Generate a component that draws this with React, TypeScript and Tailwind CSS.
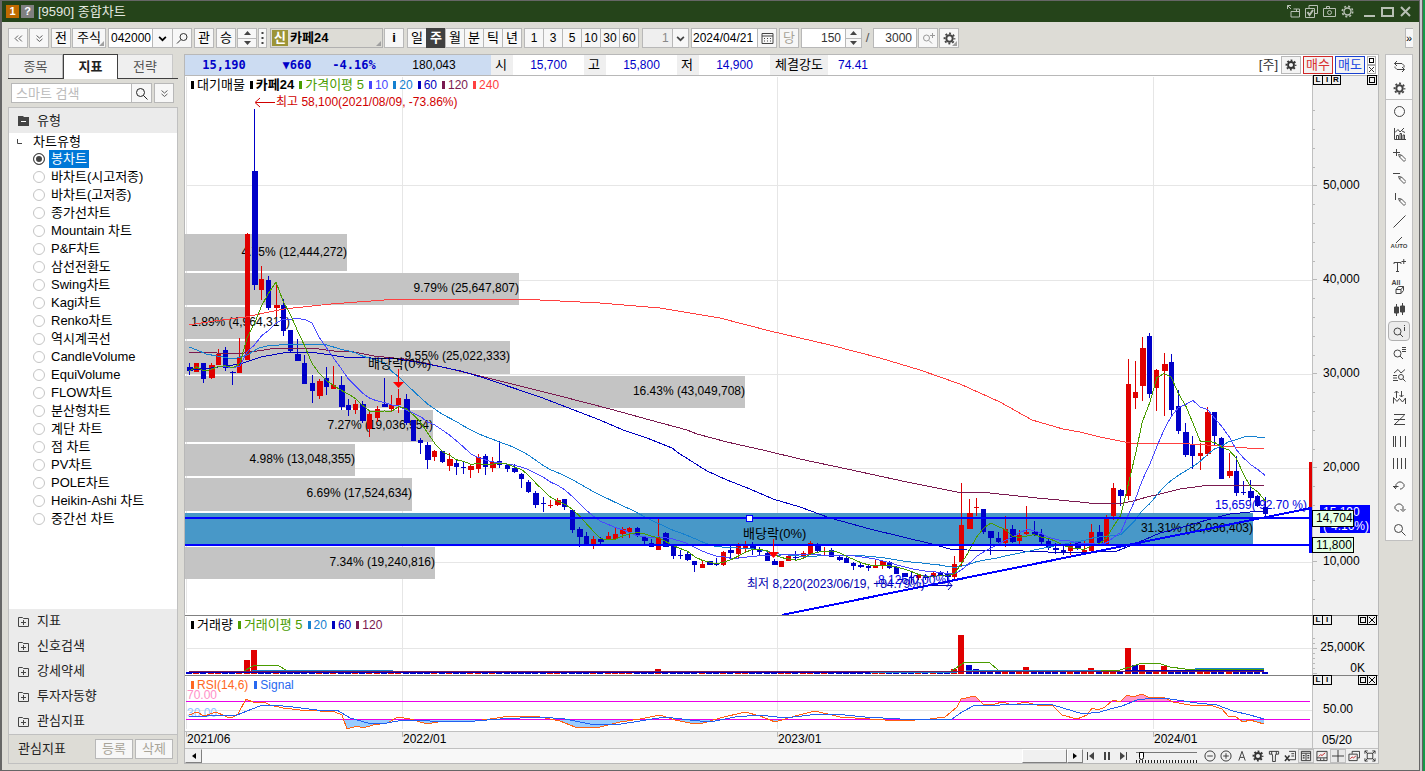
import { ReactNode } from 'react'

// [body top, body bottom, high, low, rising]
const candles = [
  [367, 371, 363, 375, 0], [363, 372, 363, 372, 1], [363, 379, 363, 383, 0], [365, 378, 363, 379, 1], [354, 365, 349, 365, 1],
  [350, 368, 347, 371, 0], [372, 373, 371, 385, 0], [358, 373, 338, 373, 1], [234, 360, 233, 360, 1], [171, 285, 109, 290, 0],
  [279, 290, 266, 300, 1], [280, 308, 276, 310, 0], [305, 308, 282, 317, 1], [305, 331, 299, 336, 0], [330, 351, 330, 352, 0],
  [354, 361, 339, 361, 0], [363, 384, 355, 384, 0], [383, 391, 375, 403, 0], [381, 396, 379, 399, 1], [378, 387, 367, 395, 0],
  [385, 389, 366, 389, 1], [385, 407, 376, 410, 0], [405, 410, 399, 416, 0], [404, 410, 400, 414, 1], [404, 421, 401, 423, 0],
  [414, 429, 412, 437, 1], [409, 418, 406, 422, 1], [404, 407, 378, 407, 0], [405, 409, 395, 411, 1], [398, 405, 389, 413, 1],
  [399, 423, 394, 425, 0], [420, 441, 420, 441, 0], [440, 443, 438, 454, 0], [445, 460, 442, 469, 0], [451, 457, 450, 461, 1],
  [451, 462, 451, 463, 0], [459, 466, 453, 471, 1], [463, 467, 460, 475, 0], [467, 468, 461, 474, 0], [466, 470, 464, 478, 1],
  [457, 469, 454, 473, 1], [456, 467, 454, 475, 0], [462, 468, 457, 472, 1], [461, 465, 441, 468, 0], [465, 469, 464, 472, 0],
  [468, 472, 464, 473, 0], [474, 479, 473, 488, 0], [482, 492, 480, 493, 0], [493, 505, 491, 508, 0], [503, 504, 497, 512, 0],
  [505, 506, 500, 508, 1], [500, 505, 498, 506, 1], [499, 507, 499, 510, 0], [510, 530, 510, 533, 0], [529, 537, 527, 547, 0],
  [536, 545, 532, 545, 0], [539, 545, 536, 549, 1], [539, 542, 537, 545, 0], [536, 539, 532, 539, 1], [534, 539, 527, 539, 1],
  [529, 534, 527, 538, 1], [528, 532, 527, 538, 1], [528, 536, 527, 537, 0], [537, 541, 536, 545, 0], [543, 547, 539, 547, 0],
  [537, 550, 519, 550, 1], [533, 547, 532, 547, 0], [545, 556, 545, 559, 0], [555, 556, 550, 559, 0], [554, 560, 551, 561, 0],
  [561, 565, 561, 572, 0], [564, 568, 560, 568, 1], [561, 565, 561, 565, 0], [563, 565, 558, 566, 0], [552, 565, 551, 566, 1],
  [550, 553, 546, 559, 0], [546, 554, 543, 558, 1], [546, 548, 541, 553, 1], [544, 549, 542, 555, 0], [549, 552, 547, 555, 0],
  [553, 561, 551, 561, 0], [561, 565, 559, 565, 0], [561, 567, 561, 567, 1], [556, 561, 554, 561, 1], [557, 558, 551, 560, 0],
  [553, 557, 551, 558, 1], [543, 554, 541, 554, 1], [545, 551, 543, 552, 0], [551, 552, 547, 555, 1], [550, 557, 548, 557, 0],
  [557, 560, 556, 561, 0], [558, 563, 555, 563, 0], [563, 566, 562, 570, 0], [565, 567, 563, 568, 0], [566, 568, 565, 571, 0],
  [565, 568, 560, 568, 1], [561, 566, 560, 569, 1], [562, 568, 561, 569, 0], [567, 574, 566, 574, 0], [573, 577, 573, 577, 0],
  [577, 578, 572, 583, 0], [575, 578, 575, 580, 1], [577, 578, 574, 580, 0], [573, 577, 571, 578, 1], [572, 575, 571, 576, 0],
  [573, 577, 571, 581, 0], [564, 577, 556, 580, 1], [525, 562, 483, 566, 1], [513, 529, 499, 529, 1], [507, 508, 498, 516, 1],
  [509, 532, 509, 534, 0], [531, 538, 531, 555, 0], [538, 542, 532, 543, 0], [529, 543, 516, 547, 1], [529, 542, 525, 543, 0],
  [535, 541, 530, 544, 1], [532, 534, 506, 535, 1], [532, 535, 521, 536, 0], [534, 542, 529, 545, 0], [541, 548, 537, 550, 0],
  [548, 550, 543, 554, 0], [550, 552, 546, 555, 0], [545, 551, 543, 555, 1], [542, 549, 541, 550, 0], [550, 552, 540, 552, 1],
  [532, 551, 524, 551, 1], [532, 543, 525, 546, 0], [517, 544, 515, 544, 1], [488, 516, 483, 520, 1], [490, 496, 489, 506, 0],
  [384, 496, 359, 500, 1], [392, 398, 361, 409, 1], [348, 386, 337, 401, 1], [336, 394, 333, 398, 0], [370, 388, 369, 411, 1],
  [364, 371, 353, 416, 1], [362, 410, 354, 415, 0], [406, 431, 390, 434, 0], [432, 455, 423, 457, 0], [444, 456, 436, 469, 0],
  [453, 456, 443, 470, 1], [412, 454, 407, 456, 1], [412, 436, 412, 445, 0], [438, 479, 437, 479, 0], [471, 476, 453, 478, 1],
  [471, 493, 456, 496, 0], [492, 493, 481, 495, 0], [491, 498, 480, 501, 0], [496, 506, 495, 507, 0], [507, 514, 497, 517, 0],
]

const closes = candles.map(([top, bottom, , , up]) => (up ? top : bottom))
const cx = (i: number) => 189.4 + i * 7.22

function average(period: number, from = 0) {
  return closes
    .map((_, i) => {
      const part = closes.slice(Math.max(0, i - period + 1), i + 1)
      return `${cx(i).toFixed(1)},${(part.reduce((a, b) => a + b, 0) / part.length).toFixed(1)}`
    })
    .slice(from)
    .join(' ')
}

const priceLines = [
  { color: '#ff4040', points: '189,325 214,321 246,317 264,313 284,309 331,304 384,300 401,299 520,299 600,303 660,308 720,318 770,331 830,345 880,358 920,370 960,384 1000,402 1032,420 1063,429 1080,432 1100,437 1130,443 1190,444 1223,446 1247,448 1264,449' },
  { color: '#7a1a50', points: '189,352 217,353 244,353 257,351 277,348 311,348 334,351 354,352 374,356 404,359 424,363 451,369 484,377 560,396 610,409 650,420 687,430 697,434 727,442 767,451 800,459 847,469 907,482 957,492 980,492 1037,498 1080,502 1097,504 1123,503 1133,501 1147,497 1160,494 1180,489 1210,485 1240,485 1264,486' },
  { color: '#0000c0', points: '189,370 211,368 240,364 261,357 283,353 297,352 317,353 344,357 397,359 417,362 437,366 461,371 484,378 540,397 600,420 623,430 647,438 672,448 680,454 707,471 727,480 750,489 773,499 800,507 830,518 870,529 907,538 928,543 950,549 967,550 1023,551 1073,553 1097,552 1117,551 1137,543 1160,533 1183,527 1207,520 1230,514 1250,512 1264,511' },
  { color: '#1480d0', points: '189,347 197,350 206,354 217,356 234,359 247,355 259,348 267,346 291,344 324,344 ' + average(20, 20) },
  { color: '#4848ff', points: average(10) },
  { color: '#4a9c00', points: average(5) },
]

const profile = [
  { y: 234, h: 37, end: 347, label: '4.75% (12,444,272)' },
  { y: 273, h: 32, end: 519, label: '9.79% (25,647,807)' },
  { y: 307, h: 32, end: 249, label: '1.89% (4,964,317)' },
  { y: 341, h: 33, end: 510, label: '9.55% (25,022,333)' },
  { y: 376, h: 32, end: 745, label: '16.43% (43,049,708)' },
  { y: 410, h: 32, end: 433, label: '7.27% (19,036,954)' },
  { y: 444, h: 32, end: 355, label: '4.98% (13,048,355)' },
  { y: 478, h: 33, end: 412, label: '6.69% (17,524,634)' },
  { y: 513, h: 32, end: 1253, label: '31.31% (82,036,403)' },
  { y: 547, h: 32, end: 435, label: '7.34% (19,240,816)' },
]

const volumes: Record<number, number> = {
  8: 14, 9: 24, 65: 5, 66: 3, 106: 5, 107: 39, 108: 9, 109: 5, 110: 3, 113: 4, 116: 7, 117: 4, 118: 3, 125: 6, 127: 3,
  128: 4, 129: 3, 130: 26, 131: 9, 132: 9, 133: 4, 134: 4, 135: 8, 136: 4, 137: 4, 138: 3, 141: 5, 142: 3,
}

const rsi = '189,715 197,712 204,716 216,712 227,717 233,717 238,714 246,699 255,703 264,702 270,705 283,708 300,710 320,711 335,712 342,715 347,729 357,726 363,728 373,725 387,723 398,717 410,719 427,724 443,721 475,721 490,719 510,716 540,717 560,721 575,727 600,727 620,722 640,719 660,715 675,720 690,723 700,724 720,718 745,712 760,716 775,722 795,716 815,711 840,717 870,719 900,721 930,719 945,717 957,707 961,699 975,696 983,704 995,704 1002,702 1013,705 1025,702 1037,705 1053,706 1062,715 1077,719 1087,715 1092,708 1098,710 1105,707 1113,700 1120,702 1127,695 1133,697 1142,694 1150,698 1163,697 1173,702 1190,705 1210,705 1222,709 1228,716 1235,716 1243,722 1250,720 1257,722 1264,724'
const signal = '189,716 207,716 220,715 237,715 247,711 260,706 273,705 293,707 317,710 337,710 350,718 368,723 387,723 403,720 430,721 475,721 500,719 540,717 565,719 590,724 615,725 640,721 665,717 690,720 710,722 735,717 760,715 785,718 810,715 835,714 865,717 900,719 930,720 952,719 962,712 975,705 1000,705 1010,704 1033,704 1053,705 1063,708 1083,714 1100,712 1110,709 1122,706 1137,700 1153,698 1170,699 1197,703 1217,705 1233,711 1250,715 1264,719'

const chartTypes = [
  '봉차트', '바차트(시고저종)', '바차트(고저종)', '종가선차트', 'Mountain 차트', 'P&F차트', '삼선전환도', 'Swing차트', 'Kagi차트', 'Renko차트',
  '역시계곡선', 'CandleVolume', 'EquiVolume', 'FLOW차트', '분산형차트', '계단 차트', '점 차트', 'PV차트', 'POLE차트', 'Heikin-Ashi 차트', '중간선 차트',
]

function Ico({ children, size = 13 }: { children: ReactNode; size?: number }) {
  return (
    <svg width={size} height={size} viewBox="0 0 13 13" fill="none" stroke="currentColor" strokeWidth="1" className="shrink-0" aria-hidden="true">
      {children}
    </svg>
  )
}

const gear = (
  <>
    <circle cx="6.5" cy="6.5" r="3.2" strokeWidth="2" />
    <circle cx="6.5" cy="6.5" r="5" strokeWidth="1.8" strokeDasharray="1.96 1.96" strokeDashoffset="1" />
  </>
)
const lens = (
  <>
    <circle cx="5.5" cy="5.5" r="4" />
    <path d="M8.500 8.500l4 4" />
  </>
)
const pencil = <path d="M5.500 5.500l3 .5 4.500 4.500-2 2L6.500 8zM8.500 6L6.500 8" strokeWidth=".9" />

function Btn({ className = '', label, children }: { className?: string; label?: string; children: ReactNode }) {
  return (
    <button type="button" aria-label={label} className={`flex h-5 shrink-0 items-center justify-center border border-[#b8b8b8] bg-[#f7f7f7] ${className}`}>
      {children}
    </button>
  )
}

function Spinner({ className = '' }: { className?: string }) {
  return (
    <span className={`flex h-5 flex-col border border-[#b8b8b8] bg-[#f7f7f7] ${className}`}>
      <button type="button" aria-label="증가" className="flex flex-1 items-center justify-center border-b border-[#b8b8b8]">
        <svg width="7" height="4" viewBox="0 0 7 4"><path d="M0 4L3.5 0 7 4z" fill="#444" /></svg>
      </button>
      <button type="button" aria-label="감소" className="flex flex-1 items-center justify-center">
        <svg width="7" height="4" viewBox="0 0 7 4"><path d="M0 0L3.5 4 7 0z" fill="#444" /></svg>
      </button>
    </span>
  )
}

function TitleBar() {
  return (
    <header className="flex h-[21px] shrink-0 items-center bg-[#25441a] pl-[4px] pr-[7px] text-[13px] text-[#e4e8e0]">
      <span className="flex size-[13px] items-center justify-center bg-[#c06a00] text-[11px] font-bold text-white">1</span>
      <span className="ml-[2px] flex size-[13px] items-center justify-center bg-[#808080] text-[11px] font-bold text-white">?</span>
      <h1 className="ml-1 font-normal">[9590] 종합차트</h1>
      <div className="ml-auto flex items-center gap-[5px] text-[#b8c0b4]">
        <button type="button" aria-label="분리"><Ico><path d="M.5 4V.5H4M.5.5l3.500 3.500M4 6.500V12h8.500V4H6.500M4 6.500h8.500M9.500 4v2.500" /></Ico></button>
        <button type="button" aria-label="체크"><Ico><path d="M4 3V.5h8.500v8H10M.5 3.500h9v9h-9z" /><path d="M2.500 7l2 3 3.500-5" strokeWidth="2" /></Ico></button>
        <button type="button" aria-label="캡처"><Ico><path d="M.5 3.500h12v8H.5zM3.500 3.500v-2h3v2" /><circle cx="6.500" cy="7.500" r="2" /></Ico></button>
        <button type="button" aria-label="설정"><Ico><circle cx="6.500" cy="6.500" r="3.500" strokeWidth="1.400" /><circle cx="6.500" cy="6.500" r="5.200" strokeWidth="1.600" strokeDasharray="2.040 2.040" /></Ico></button>
        <button type="button" aria-label="최소화" className="ml-1"><Ico><path d="M1 11h11" strokeWidth="2" /></Ico></button>
        <button type="button" aria-label="최대화"><Ico><path d="M1 3h11v8H1z" strokeWidth="2" /></Ico></button>
        <button type="button" aria-label="닫기"><Ico><path d="M2 2l9 9M11 2l-9 9" strokeWidth="2" /></Ico></button>
      </div>
    </header>
  )
}

function Toolbar() {
  return (
    <div className="flex h-8 shrink-0 items-center gap-px pl-[6px] pr-[6px] text-[13px] text-black">
      <Btn label="이전" className="w-5 text-[#444]"><Ico size={11}><path d="M6 3L2.500 6.500 6 10M10.500 3L7 6.500l3.500 3.500" /></Ico></Btn>
      <Btn label="펼치기" className="w-5 text-[#444]"><Ico size={11}><path d="M3 3l3.500 3L10 3M3 7l3.500 3L10 7" /></Ico></Btn>
      <Btn className="ml-px w-5">전</Btn>
      <Btn className="relative w-[34px]">주식<Corner /></Btn>
      <div className="ml-px flex">
        <input aria-label="종목코드" defaultValue="042000" className="h-5 w-[45px] border border-[#b8b8b8] bg-white pl-[2px] text-[12px]" />
        <Btn label="종목 목록" className="w-[20px] border-l-0"><Ico size={11}><path d="M2.500 4.500l4 4 4-4" strokeWidth="2" /></Ico></Btn>
        <Btn label="종목 검색" className="w-[19px] border-l-0 text-[#333]"><Ico><circle cx="7.500" cy="5" r="3.500" /><path d="M5 7.500l-4 4" /></Ico></Btn>
      </div>
      <Btn className="ml-px w-5">관</Btn>
      <Btn className="ml-px w-5">승</Btn>
      <Spinner className="w-5" />
      <Btn label="더보기" className="w-[9px]">
        <svg width="3" height="12" viewBox="0 0 3 12"><path d="M.5 0h2v2h-2zM.5 5h2v2h-2zM.5 10h2v2h-2z" fill="#444" /></svg>
      </Btn>
      <div className="relative ml-[2px] flex h-5 w-[113px] items-center border border-[#b0b0b0] pl-px font-bold">
        <span className="mr-[2px] flex h-4 w-4 items-center justify-center bg-[#9c9438] text-white">신</span>카페24
        <Corner />
      </div>
      <Btn className="w-5 font-bold">i</Btn>
      <div className="ml-[2px] flex">
        {['일', '주', '월', '분', '틱', '년'].map((t) => (
          <Btn key={t} className={`-mr-px w-5 ${t === '주' ? 'border-[#404040]! bg-[#404040]! font-bold text-white' : ''}`}>{t}</Btn>
        ))}
      </div>
      <div className="ml-[2px] flex text-[12px]">
        {['1', '3', '5', '10', '30', '60'].map((t) => (
          <Btn key={t} className="-mr-px w-5">{t}</Btn>
        ))}
      </div>
      <div className="relative ml-[3px] text-[12px] text-[#888]">
        <select aria-label="주기" className="h-5 w-[47px] appearance-none border border-[#b8b8b8] bg-[#efefef] pl-[19px]">
          <option>1</option>
        </select>
        <span className="pointer-events-none absolute right-px top-px flex h-[18px] w-4 items-center justify-center border-l border-[#b8b8b8] bg-[#f7f7f7] text-[#444]">
          <Ico size={11}><path d="M2.500 4.500l4 4 4-4" strokeWidth="2" /></Ico>
        </span>
      </div>
      <div className="ml-px flex">
        <input aria-label="날짜" defaultValue="2024/04/21" className="h-5 w-[67px] border border-[#b8b8b8] bg-white pl-px text-[12px]" />
        <Btn label="달력" className="w-[19px] border-l-0 text-[#444]">
          <Ico><path d="M1 1.500h11v10H1zM1 4h11" /><path d="M3 6.500h7M3 9h7" strokeDasharray="1 2" /></Ico>
        </Btn>
      </div>
      <Btn className="ml-px w-5 text-[#a8a498]">당</Btn>
      <div className="ml-px flex">
        <input aria-label="표시 봉수" defaultValue="150" className="h-5 w-[45px] border border-[#b8b8b8] bg-white pr-1 text-right text-[12px] text-[#333]" />
        <Spinner className="w-4 border-l-0" />
      </div>
      <span className="w-[9px] text-center text-[#555]">/</span>
      <input aria-label="전체 봉수" defaultValue="3000" className="h-5 w-[44px] border border-[#b8b8b8] bg-white pr-1 text-right text-[12px] text-[#333]" />
      <Btn label="확대" className="w-5 text-[#999]"><Ico><circle cx="4.500" cy="6" r="3" /><path d="M7 8.500l3 3M10.500 1v5M8 3.500h5" /></Ico></Btn>
      <Btn label="차트 설정" className="relative w-5 text-[#444]"><Ico>{gear}</Ico><Corner /></Btn>
      <button type="button" aria-label="도구 더보기" className="ml-auto flex h-5 w-2 items-center border border-r-0 border-[#b8b8b8] bg-[#f7f7f7] text-[11px]">»</button>
    </div>
  )
}

function Corner() {
  return <svg className="absolute bottom-px right-px" width="5" height="5" viewBox="0 0 5 5"><path d="M5 0v5H0z" fill="#a0a0a0" /></svg>
}

function Sidebar() {
  return (
    <aside className="flex w-[170px] shrink-0 flex-col text-[13px] text-[#222]">
      <div className="flex h-[25px] shrink-0 border-b border-[#404040]">
        <button type="button" className="h-6 w-[55px] border border-b-0 border-[#b8b8b8] bg-[#efefef] text-[#555]">종목</button>
        <button type="button" className="h-[25px] w-[55px] border border-b-0 border-[#404040] bg-white font-bold">지표</button>
        <button type="button" className="h-6 w-[55px] border border-b-0 border-l-0 border-[#c8c8c8] bg-[#efefef] text-[#555]">전략</button>
      </div>
      <div className="mt-1 flex shrink-0 pl-[3px]">
        <input aria-label="스마트 검색" placeholder="스마트 검색" className="h-5 w-[121px] border border-[#b8b8b8] bg-white pl-1 placeholder:text-[#bbb]" />
        <Btn label="검색" className="w-5 border-l-0"><Ico>{lens}</Ico></Btn>
        <Btn label="펼치기" className="ml-[2px] w-5 text-[#444]"><Ico size={11}><path d="M3 3l3.500 3L10 3M3 7l3.500 3L10 7" /></Ico></Btn>
      </div>
      <div className="mt-1 flex min-h-0 flex-1 flex-col border border-[#c0c0c0] bg-white">
        <h2 className="flex h-[25px] shrink-0 items-center bg-[#ebebeb] pl-[9px]">
          <svg width="11" height="11" viewBox="0 0 11 11" className="mr-2"><path d="M0 1h5l1 1h5v9H0z" fill="#444" /><path d="M3 6h5v1H3z" fill="#fff" /></svg>
          유형
        </h2>
        <fieldset className="min-h-0 flex-1 overflow-hidden">
          <legend className="flex h-[17px] items-center pl-2 leading-4 text-black">
            <svg width="5" height="5" viewBox="0 0 5 5" className="mr-[11px]"><path d="M.5 0v4.500H5" fill="none" stroke="#444" /></svg>
            차트유형
          </legend>
          {chartTypes.map((name, i) => (
            <label key={name} className="flex h-[18px] items-center pl-6 leading-[18px] text-black">
              <input
                type="radio"
                name="chart"
                defaultChecked={i === 0}
                className="size-3 appearance-none rounded-full border border-[#c4c4c4] bg-white checked:border-[#444] checked:bg-[#444] checked:shadow-[inset_0_0_0_2px_#fff]"
              />
              <span className={`ml-1 px-[2px] ${i === 0 ? 'bg-[#0078d7] text-white' : ''}`}>{name}</span>
            </label>
          ))}
        </fieldset>
        <div className="shrink-0 bg-[#ebebeb]">
          {['지표', '신호검색', '강세약세', '투자자동향', '관심지표'].map((name) => (
            <button key={name} type="button" className="flex h-[25px] w-full items-center pb-px pl-[9px]">
              <svg width="11" height="11" viewBox="0 0 11 11" className="mr-2" fill="none" stroke="#444"><path d="M.5 1.500h4l1 1h5v8H.5zM3 6.500h5M5.500 4v5" /></svg>
              {name}
            </button>
          ))}
        </div>
        <div className="flex h-[29px] shrink-0 items-center border-t border-[#c0c0c0] bg-[#dddcd6] pl-[9px]">
          <span className="flex-1">관심지표</span>
          <Btn className="w-[38px] bg-[#ebebeb] text-[#a8a498]">등록</Btn>
          <Btn className="ml-[2px] mr-1 w-[38px] bg-[#ebebeb] text-[#a8a498]">삭제</Btn>
        </div>
      </div>
    </aside>
  )
}

function InfoBar() {
  const cells = [['시', '15,700'], ['고', '15,800'], ['저', '14,900']]
  return (
    <div className="flex h-[21px] shrink-0 items-stretch border-b border-[#b8b8b8] bg-white text-[12px] leading-[20px]">
      <div className="flex bg-[#ccdcf2] font-['DejaVu_Sans_Mono',monospace] font-bold text-[#0000c8]">
        <span className="w-[78px] text-center">15,190</span>
        <span className="w-[68px] text-center">▼660</span>
        <span className="w-[46px] text-center">-4.16%</span>
        <span className="w-[114px] text-center font-['Liberation_Sans',sans-serif] font-normal text-black">180,043</span>
      </div>
      {cells.map(([k, v]) => (
        <div key={k} className="flex">
          <span className="w-[22px] bg-[#efefef] pl-1 text-[13px]">{k}</span>
          <span className="w-[71px] text-center text-[#0000c8]">{v}</span>
        </div>
      ))}
      <span className="w-[58px] bg-[#efefef] text-center text-[13px]">체결강도</span>
      <span className="ml-[10px] text-[#0000c8]">74.41</span>
      <div className="ml-auto flex items-center gap-[2px] pr-[2px] text-[13px]">
        <span className="mr-px text-[#333]">[주]</span>
        <button type="button" aria-label="설정" className="flex h-[18px] w-5 items-center justify-center border border-[#b8b8b8] bg-[#f4f4f4] text-[#333]"><Ico size={12}>{gear}</Ico></button>
        <button type="button" className="h-[18px] w-[30px] border border-[#d02828] bg-[#f4f4f4] leading-4 text-[#d83030]">매수</button>
        <button type="button" className="h-[18px] w-[30px] border border-[#1840d0] bg-[#f4f4f4] leading-4 text-[#2048e0]">매도</button>
        <div className="flex flex-col">
          <button type="button" aria-label="확대" className="flex size-[9px] items-center justify-center border border-[#b0b0b0]"><span className="size-[5px] border border-black" /></button>
          <button type="button" aria-label="닫기" className="flex size-[9px] items-center justify-center border border-[#b0b0b0]"><svg width="5" height="5" viewBox="0 0 5 5" stroke="#333"><path d="M0 0l5 5M5 0L0 5" /></svg></button>
        </div>
      </div>
    </div>
  )
}

function Key({ color, text, bold }: { color: string; text: string; bold?: boolean }) {
  return (
    <span className={`flex items-center whitespace-nowrap ${bold ? 'font-bold' : ''} ${/^\d+$/.test(text) ? 'text-[12px]' : ''}`} style={{ color }}>
      <i className="mr-[3px] h-2 w-[3px]" style={{ background: color }} />
      {text}
    </span>
  )
}

function PaneButtons({ keys, close }: { keys: string[]; close?: boolean }) {
  return (
    <div className="absolute inset-x-0 top-0 -mt-px flex justify-between pr-px text-[8px] font-bold leading-[8px] text-black">
      <span className="flex">
        {keys.map((k) => (
          <button key={k} type="button" className="-mr-px h-[10px] w-[10px] border border-black">{k}</button>
        ))}
      </span>
      <span className="flex">
        <button type="button" aria-label="최대화" className="flex size-[10px] items-center justify-center border border-black"><span className="size-[6px] border border-black" /></button>
        {close && <button type="button" aria-label="닫기" className="-ml-px flex size-[10px] items-center justify-center border border-black"><svg width="6" height="6" viewBox="0 0 6 6" stroke="#000"><path d="M0 0l6 6M6 0L0 6" /></svg></button>}
      </span>
    </div>
  )
}

const years = [186, 402, 777, 1153]

function PricePane() {
  return (
    <section className="grid min-h-0 flex-1 grid-cols-[minmax(0,1fr)_66px]">
      <div className="relative min-h-0">
        <svg className="absolute size-full" viewBox="185 76 1127 539" preserveAspectRatio="none" fontSize="12">
          <g shapeRendering="crispEdges" fill="none" stroke="#e6e6e6">
            {years.map((x) => <path key={x} d={`M${x + 0.5} 77V613`} />)}
            {[185, 280, 374, 468, 562].map((y) => <path key={y} d={`M187 ${y + 0.5}H1312`} />)}
          </g>
          {profile.map((p) => (
            <rect key={p.y} x="185" y={p.y} width={p.end - 185} height={p.h} fill={p.y === 513 ? '#4898c8' : '#c4c4c4'} shapeRendering="crispEdges" />
          ))}
          {profile.map((p) => (
            <text key={p.y} x={Math.max(p.end, 290)} y={p.y === 234 ? 256 : p.y + 19} textAnchor="end">{p.label}</text>
          ))}
          <g shapeRendering="crispEdges">
            {candles.map(([top, bottom, hi, lo, up], i) => {
              const x = Math.floor(cx(i))
              return (
                <g key={i} fill={up ? '#e00000' : '#0000c8'}>
                  <rect x={x} y={hi} width="1" height={lo - hi} />
                  <rect x={x - 2} y={top} width={i % 3 ? 5 : 6} height={bottom - top} />
                </g>
              )
            })}
          </g>
          {priceLines.map((l) => <polyline key={l.color} points={l.points} fill="none" stroke={l.color} shapeRendering="crispEdges" />)}
          <g fill="none" stroke="#0000ff" strokeWidth="2" shapeRendering="crispEdges">
            <path d="M185 518H1310M185 545H1310M782 615L1311 508" />
          </g>
          <rect x="746.500" y="515.500" width="6" height="6" fill="#fff" stroke="#0000ff" />
          <path d="M1309 462h3v45h-3z" fill="#e00000" />
          <path d="M1309 507h3v46h-3z" fill="#0000ff" />
          <text x="368" y="368" fontSize="13">배당락(0%)</text>
          <text x="743" y="538" fontSize="13">배당락(0%)</text>
          <path d="M398.500 369v16M773.500 539v14" stroke="#f00" />
          <path d="M393 382h11l-5.500 6zM768 552h11l-5.500 6z" fill="#f00" />
          <path d="M275 102.500h-19M260 98l-5 4.500 5 4.500" stroke="#d00000" fill="none" />
          <text x="276" y="106" fill="#d00000">최고 58,100(2021/08/09, -73.86%)</text>
          <text x="747" y="588" fill="#0000b0">최저 8,220(2023/06/19, +84.79%)</text>
          <path d="M932 585.500h20M948 581l4 4.500-4 4.500" stroke="#0000b0" fill="none" />
          <text x="878" y="584" fill="#0000e0">8,126(0.00%)</text>
          <text x="1307" y="509" fill="#0000e0" textAnchor="end">15,659( 92.70 %)</text>
        </svg>
        <div className="absolute left-[6px] top-0 flex h-[18px] items-center gap-[5px] text-[13px]">
          <Key color="#000000" text="대기매물" />
          <Key color="#000000" text="카페24" bold />
          <Key color="#4a9c00" text="가격이평 5" />
          <Key color="#4848ff" text="10" />
          <Key color="#1480d0" text="20" />
          <Key color="#0000c0" text="60" />
          <Key color="#7a1a50" text="120" />
          <Key color="#ff4040" text="240" />
        </div>
      </div>
      <div className="relative border-l border-[#c0c0c0] bg-[#f0f0f0]">
        <svg className="absolute size-full" viewBox="1313 76 65 539" preserveAspectRatio="none" fontSize="12">
          {[50, 40, 30, 20, 10].map((v, i) => (
            <g key={v}>
              <path d={`M1313 ${185.5 + i * 94}h4m-4 19h2m-2 19h2m-2 19h2m-2 19h2`} stroke="#b8b8b8" />
              <text x="1323" y={189 + i * 94}>{v},000</text>
            </g>
          ))}
          <path d="M1313 110.500h2m-2 19h2m-2 19h2m-2 19h2" stroke="#b8b8b8" />
        </svg>
        <div className="absolute left-[7px] top-[429px] h-7 w-[50px] bg-[#0000ff] pl-[3px] text-[12px] leading-[14px] text-white">15,190<br />(-4.16%)</div>
        <div className="absolute -left-px top-[434px] h-[17px] w-[42px] border border-black bg-[#e4ffe4] pl-[3px] text-[12px] leading-[15px]">14,704</div>
        <div className="absolute -left-px top-[461px] h-[16px] w-[42px] border border-black bg-[#e4ffe4] pl-[3px] text-[12px] leading-[15px]">11,800</div>
        <PaneButtons keys={['L', 'I', 'R']} />
      </div>
    </section>
  )
}

function VolumePane() {
  return (
    <section className="grid h-[60px] shrink-0 grid-cols-[minmax(0,1fr)_66px] border-t border-[#808080]">
      <div className="relative">
        <svg className="absolute size-full" viewBox="185 616 1127 59" preserveAspectRatio="none" shapeRendering="crispEdges">
          <g stroke="#e6e6e6">
            {years.map((x) => <path key={x} d={`M${x + 0.5} 617V673`} />)}
            <path d="M187 648.500H1312" />
          </g>
          {candles.map((c, i) => {
            const h = volumes[i] ?? 2
            const prev = volumes[i - 1] ?? 2
            const red = h === prev ? c[4] : h > prev
            return <rect key={i} x={Math.floor(cx(i)) - 3} y={674 - h} width="6" height={h} fill={red ? '#e00000' : '#0000c8'} />
          })}
          <g fill="none">
            <path d="M189 671.500H243L255 665H277L288 671H480L650 672H950L965 662H985L990 663 998 670H1120L1133 666 1142 663H1158L1170 667 1185 669H1264" stroke="#4a9c00" />
            <path d="M189 672.500H243L255 670.500H392V672.500H953L970 670.500H1100V671.500H1135V670.500H1195V668.500H1264" stroke="#1480d0" />
            <path d="M189 672.500H870M960 671.500H1120L1130 670.500H1264" stroke="#0000c0" />
            <path d="M189 671.500H1264" stroke="#7a1a50" />
          </g>
        </svg>
        <div className="absolute left-[6px] top-px flex h-4 items-center gap-[5px] text-[13px]">
          <Key color="#000000" text="거래량" />
          <Key color="#4a9c00" text="거래이평 5" />
          <Key color="#1480d0" text="20" />
          <Key color="#0000c0" text="60" />
          <Key color="#7a1a50" text="120" />
        </div>
      </div>
      <div className="relative border-l border-[#c0c0c0] bg-[#f0f0f0] text-[12px]">
        <svg className="absolute size-full" viewBox="1313 616 65 59" preserveAspectRatio="none" stroke="#b8b8b8">
          <path d="M1313 638.500h2m-2 5h2m-2 5h4m-4 5h2m-2 5h2m-2 5h2m-2 5h2m-2 5h4" />
        </svg>
        <div className="absolute inset-x-0 top-[21px] pr-[13px] text-right leading-[21px]">25,000K<br />0K</div>
        <PaneButtons keys={['L', 'I']} close />
      </div>
    </section>
  )
}

function RsiPane() {
  return (
    <section className="grid h-[56px] shrink-0 grid-cols-[minmax(0,1fr)_66px] border-t border-[#808080]">
      <div className="relative">
        <svg className="absolute size-full" viewBox="185 676 1127 55" preserveAspectRatio="none" fontSize="12">
          <clipPath id="over"><rect x="185" y="676" width="1127" height="25" /></clipPath>
          <clipPath id="under"><rect x="185" y="720" width="1127" height="11" /></clipPath>
          <g stroke="#e6e6e6" shapeRendering="crispEdges">
            {years.map((x) => <path key={x} d={`M${x + 0.5} 677V729`} />)}
            <path d="M187 710.500H1312" />
          </g>
          <text x="187" y="699" fill="#ff90c8">70.00</text>
          <text x="187" y="717" fill="#90c8ff">30.00</text>
          <polygon points={`189,702 ${rsi} 1264,702`} fill="#ff98c8" clipPath="url(#over)" />
          <polygon points={`189,719 ${rsi} 1264,719`} fill="#98ccff" clipPath="url(#under)" />
          <g fill="none" shapeRendering="crispEdges">
            <path d="M186 701.500H1310M186 719.500H1310" stroke="#e800e8" />
            <polyline points={rsi} stroke="#ff6010" />
            <polyline points={signal} stroke="#2060f0" />
          </g>
        </svg>
        <div className="absolute left-[6px] top-px flex h-4 items-center gap-[6px] text-[12px]">
          <Key color="#ff6820" text="RSI(14,6)" />
          <Key color="#2868f0" text="Signal" />
        </div>
      </div>
      <div className="relative border-l border-[#c0c0c0] bg-[#f0f0f0] text-[12px]">
        <span className="absolute left-[10px] top-[25px] leading-4">50.00</span>
        <PaneButtons keys={['L', 'I']} close />
      </div>
    </section>
  )
}

const footIcons: [string, ReactNode][] = [
  ['축소', <><circle cx="6.500" cy="6.500" r="5.500" /><path d="M3.500 6.500h6" /></>],
  ['확대', <><circle cx="6.500" cy="6.500" r="5.500" /><path d="M3.500 6.500h6M6.500 3.500v6" /></>],
  ['글꼴', <path d="M3 11.500l3.500-10 3.500 10M4.500 8h4" />],
  ['설정', gear],
  ['도구', <path d="M1.500 1.500h10v3h-3l-.5 2v6H5v-6l-.5-2h-3zM4 1.500v3M9 1.500v3" />],
  ['엑셀', <><path d="M5.500 1.500h7v9h-7M8 4h3M8 6.500h3" /><path d="M1 6l5 6M6 6l-5 6" strokeWidth="1.600" /></>],
  ['정보창', <><path d="M1.500 1.500h10v10h-10zM1.500 3.500h10M6.500 4v7" /><path d="M3 6h2M3 8.500h2M8 6h2M8 8.500h2" strokeWidth="1.400" /></>],
  ['지표', <><path d="M1 1.500h11v10H1zM1 8.500h11M5 9v2M8.500 9v2" /><path d="M3 7l2-2 1.500 1L10 3" stroke="#c02020" /></>],
  ['십자선', <path d="M6.500 0v13M0 6.500h13" />],
  ['창', <><path d="M4.500 4V1.500h8v7H10M1 4.500h9v7H1z" /><path d="M2.500 9.500l2-2 1.500 1 2.500-2" stroke="#c02020" /></>],
  ['전체', <><path d="M1 4V1h3M9 1h3v3M12 9v3H9M4 12H1V9M1 1l3 3M12 1L9 4M12 12L9 9M1 12l3-3" /><path d="M3.500 3.500h6v6h-6z" /></>],
]

function BottomRows() {
  return (
    <>
      <div className="grid h-[17px] shrink-0 grid-cols-[minmax(0,1fr)_66px] border-t border-[#c0c0c0] bg-[#f0f0f0] text-[12px]">
        <svg className="h-4 w-full" viewBox="185 732 1127 16" preserveAspectRatio="none" fontSize="12">
          {['2021/06', '2022/01', '2023/01', '2024/01'].map((d, i) => (
            <g key={d}>
              <path d={`M${years[i] + 0.5} 732v5`} stroke="#b8b8b8" />
              <text x={years[i] + 1} y="743">{d}</text>
            </g>
          ))}
        </svg>
        <span className="border-l border-[#c0c0c0] pl-[9px] leading-4">05/20</span>
      </div>
      <div className="flex h-[15px] shrink-0 border-t border-[#c0c0c0] bg-[#f0f0f0] text-[#333]">
        <button type="button" aria-label="왼쪽" className="flex w-[17px] items-center justify-center border border-[#f0f0f0] border-b-[#808080] border-r-[#808080]">
          <svg width="4" height="6" viewBox="0 0 4 6"><path d="M4 0v6L0 3z" /></svg>
        </button>
        <div className="flex min-w-0 flex-1 justify-end bg-[#f8f8f8]">
          <div className="w-[45px] border border-[#fff] border-b-[#808080] border-r-[#808080] bg-[#f0f0f0]" />
        </div>
        <button type="button" aria-label="오른쪽" className="flex w-4 items-center justify-center border border-[#fff] border-b-[#808080] border-r-[#808080]">
          <svg width="4" height="6" viewBox="0 0 4 6"><path d="M0 0v6l4-3z" /></svg>
        </button>
        <button type="button" aria-label="처음" className="flex w-4 items-center justify-center"><svg width="8" height="8" viewBox="0 0 8 8"><path d="M0 0h1v8H0zM7 0v8L2 4z" fill="#444" /></svg></button>
        <button type="button" aria-label="정지" className="flex w-4 items-center justify-center"><svg width="8" height="8" viewBox="0 0 8 8"><path d="M1 0h2v8H1zM5 0h2v8H5z" fill="#444" /></svg></button>
        <button type="button" aria-label="끝" className="flex w-4 items-center justify-center"><svg width="8" height="8" viewBox="0 0 8 8"><path d="M7 0h1v8H7zM1 0v8l5-4z" fill="#444" /></svg></button>
        <input
          type="range"
          aria-label="속도"
          defaultValue="5"
          className="mx-[5px] h-[14px] w-[61px] appearance-none bg-[repeating-linear-gradient(90deg,#222_0_1px,transparent_1px_3px)] bg-[length:100%_3px] bg-bottom bg-no-repeat [&::-webkit-slider-runnable-track]:h-[8px] [&::-webkit-slider-runnable-track]:border-t [&::-webkit-slider-runnable-track]:border-[#777] [&::-webkit-slider-thumb]:-mt-px [&::-webkit-slider-thumb]:h-[8px] [&::-webkit-slider-thumb]:w-[5px] [&::-webkit-slider-thumb]:appearance-none [&::-webkit-slider-thumb]:rounded-b-sm [&::-webkit-slider-thumb]:border [&::-webkit-slider-thumb]:border-black [&::-webkit-slider-thumb]:bg-white"
        />
        {footIcons.map(([name, icon]) => (
          <button key={name} type="button" aria-label={name} className={`flex w-4 items-center justify-center ${name === '정보창' || name === '십자선' ? 'border border-[#c0c0c0] bg-[#e8e8e8]' : ''}`}>
            <Ico size={12}>{icon}</Ico>
          </button>
        ))}
      </div>
    </>
  )
}

const tools: [string, ReactNode][] = [
  ['새로고침', <path d="M4 1L1.500 3.500 4 6M1.500 3.500H9l2 2v2M9 12l2.500-2.500L9 7M11.500 9.500H4l-2-2v-1" />],
  ['설정', gear],
  ['원', <circle cx="6.500" cy="6.500" r="5" />],
  ['차트', <path d="M1.500 1v11.500H13M3.500 12V8.500h2V12M7 12V6.500h1.500V12M10 12V8h1.500v4M2 5.500l3-3 2 2.500 4-4M9 4l3 1.500" />],
  ['십자 추세', <><path d="M0 3.500h7M3.500 0v7" />{pencil}</>],
  ['수평선', <><path d="M0 2.500h7" />{pencil}</>],
  ['수직선', <><path d="M2.500 0v7" />{pencil}</>],
  ['추세선', <path d="M.5 12.500l12-12" />],
  ['자동', null],
  ['텍스트', <><path d="M1 5V3.500h7V5M4.500 3.500v9M3 12.500h3M8.500 2.500h4.500M10.750 0v5" /></>],
  ['전체 지우기', null],
  ['봉', <><path d="M3.500 1v12M9.500 0v12" /><path d="M1.500 4h4v6h-4zM7.500 3h4v6h-4z" fill="currentColor" /></>],
  ['정보', <><circle cx="4.500" cy="6.500" r="3.500" /><path d="M7 9l3 3M11.500 0v1M11.500 2v4" /></>],
  ['목록', <><circle cx="4.500" cy="6.500" r="3.500" /><path d="M7 9l3 3M9 .5h4M9 2.500h4M9 4.500h4" /></>],
  ['검색 차트', <><path d="M1 4l4-3.500 3 3.500 4-3.500M0 6.500h4M0 9h4M0 11.500h5" /><circle cx="8" cy="8" r="2.500" /><path d="M10 10l2.500 2.500" /></>],
  ['패턴', <path d="M3.500 7V0M1.500 2l2-2 2 2M8.500 0v6M6.500 4l2 2 2-2M.5 12.500v-6l3.500 4 2.500-3 3 3.500 3-4v6" />],
  ['지그재그', <path d="M1 1.500h11M1 11.500h11M11.500 2L2 11M1 6.500h11" />],
  ['세로선', <path d="M.5 1v11M2.500 1v11M7.500 1v11M12.500 1v11" />],
  ['등간격', <path d="M.5 1v11M4.500 1v11M8.500 1v11M12.500 1v11" />],
  ['되돌리기', <path d="M3 9V5.500L5.500 3h3L11 5.500v2L8.500 10H7M0 7.500h5.500M3 10L.5 7.500" />],
  ['다시하기', <path d="M10 9V5.500L7.500 3h-3L2 5.500v2L4.500 10H6M7.500 8l2.500 2.500L12.500 8" />],
  ['검색', lens],
]

function ToolStrip() {
  return (
    <nav className="flex w-[28px] shrink-0 flex-col self-start border border-[#c0c0c0] bg-[#fafafa] text-[#444]">
      {tools.map(([name, icon], i) => (
        <button
          key={name}
          type="button"
          aria-label={name}
          className={`flex h-[22px] flex-col items-center justify-center ${i === 1 ? 'box-content border-b border-[#c0c0c0]' : ''} ${name === '정보' ? 'mx-[2px] h-5! my-px rounded border border-[#b0b0b0] bg-[#ececec]' : ''}`}
        >
          {name === '자동' && <><svg width="14" height="7" viewBox="0 0 14 7"><path d="M4 7l6-6" stroke="#444" /></svg><span className="text-[6px] font-bold leading-[7px]">AUTO</span></>}
          {name === '전체 지우기' && <><span className="mr-[6px] text-[7px] font-bold leading-[6px]">All</span><svg width="12" height="8" viewBox="0 0 12 8" fill="none" stroke="#444"><path d="M3 3.500L5.500.5h5L8 3.500zM3 3.500v4h5v-4M8 7.500l2.500-3v-4" /></svg></>}
          {icon && <Ico>{icon}</Ico>}
        </button>
      ))}
    </nav>
  )
}

export default function App() {
  return (
    <div className="flex h-screen bg-[#159a48] pr-[2px] font-['Liberation_Sans','Noto_Sans_CJK_KR',sans-serif] text-black">
      <div className="flex min-w-0 flex-1 border-r border-[#606060] bg-[#c8c8cc] pr-[2px]">
        <div className="flex min-w-0 flex-1 flex-col border-b border-l-2 border-r border-t border-[#666] bg-[#dddcd6]">
          <TitleBar />
          <Toolbar />
          <div className="flex min-h-0 flex-1 gap-[6px] px-[6px] pb-[6px]">
            <Sidebar />
            <main className="flex min-w-0 flex-1 flex-col border border-[#b8b8b8] bg-white">
              <InfoBar />
              <PricePane />
              <VolumePane />
              <RsiPane />
              <BottomRows />
            </main>
            <ToolStrip />
          </div>
        </div>
      </div>
    </div>
  )
}
